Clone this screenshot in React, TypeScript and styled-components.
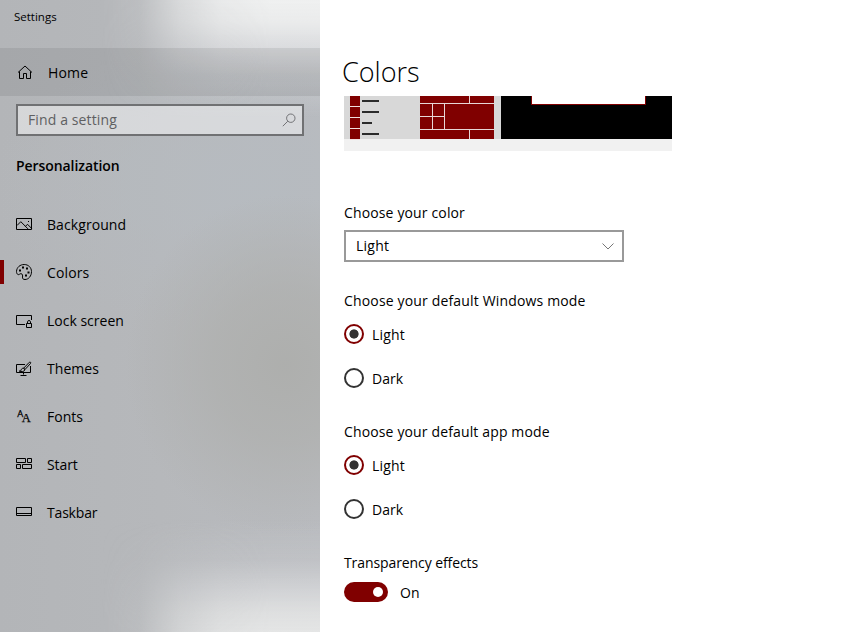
import React, { useState } from "react";
import styled, { createGlobalStyle } from "styled-components";

const ACCENT = "#800000";

const GlobalStyle = createGlobalStyle`
  * { box-sizing: border-box; }
  body {
    margin: 0;
    background: #fff;
    color: #000;
    font-family: "Open Sans", "Noto Sans", sans-serif;
    font-size: 14px;
    line-height: 20px;
    overflow: hidden;
  }
`;

const Window = styled.div`
  display: flex;
  width: 858px;
  height: 632px;
`;

const Sidebar = styled.aside`
  display: flex;
  flex-direction: column;
  position: relative;
  isolation: isolate;
  width: 320px;
  height: 632px;
  flex: none;
  background:
    radial-gradient(ellipse 160px 170px at 285px 365px, rgba(173, 174, 172, 0.95) 0%, rgba(174, 175, 173, 0.7) 45%, rgba(180, 182, 184, 0) 100%),
    radial-gradient(ellipse 260px 150px at 250px 185px, rgba(182, 187, 192, 0.95), rgba(182, 187, 192, 0) 100%),
    linear-gradient(90deg, #b3b5b8, #b6b8bb 50%, #b9bbbf);

  /* Acrylic highlights: bright bands at the top and bottom that fade out to the left. */
  &::before {
    content: "";
    position: absolute;
    inset: 0;
    z-index: -1;
    background: linear-gradient(
      180deg,
      #eff0f0 0,
      rgba(237, 238, 238, 0.94) 22px,
      rgba(230, 231, 233, 0.74) 48px,
      rgba(220, 222, 224, 0.35) 75px,
      rgba(200, 203, 207, 0) 118px,
      rgba(200, 203, 207, 0) 520px,
      rgba(214, 215, 218, 0.25) 560px,
      rgba(222, 223, 225, 0.65) 590px,
      rgba(226, 227, 227, 0.9) 612px,
      #e4e5e5 632px
    );
    mask-image: linear-gradient(
      90deg,
      transparent 100px,
      rgba(0, 0, 0, 0.13) 140px,
      rgba(0, 0, 0, 0.6) 180px,
      rgba(0, 0, 0, 0.88) 220px,
      #000 270px
    );
  }
`;

const TitleBar = styled.header`
  height: 48px;
  padding: 8px 14px;
  font-size: 11.5px;
  line-height: 18px;
`;

const Row = styled.button<{ $home?: boolean; $selected?: boolean }>`
  display: flex;
  align-items: center;
  width: 100%;
  height: 48px;
  flex: none;
  padding: 0 0 0 ${(p) => (p.$home ? 17 : 16)}px;
  border: 0;
  background: ${(p) => (p.$home ? "rgba(0, 0, 0, 0.075)" : "transparent")};
  color: #000;
  font: inherit;
  text-align: left;
  &::before {
    content: "";
    display: ${(p) => (p.$selected ? "block" : "none")};
    width: 4px;
    height: 24px;
    margin: 0 12px 0 -16px;
    background: ${ACCENT};
  }
`;

const RowIcon = styled.svg`
  width: 16px;
  height: 16px;
  flex: none;
  margin-right: 15px;
  fill: none;
  stroke: #000;
  stroke-width: 1;
  overflow: visible;
`;

const Text = styled.span<{ $track?: number; $drop?: number }>`
  padding-top: ${(p) => (p.$drop ?? 0) * 2}px;
  letter-spacing: ${(p) => p.$track ?? 0}px;
  white-space: nowrap;
`;

const SearchBox = styled.label`
  display: flex;
  align-items: center;
  justify-content: space-between;
  height: 32px;
  margin: 8px 16px 0;
  padding: 0 6px 0 10px;
  border: 2px solid #707173;
  background: rgba(255, 255, 255, 0.45);
  color: #5f6062;
`;

const SearchIcon = styled.svg`
  width: 14px;
  height: 14px;
  fill: none;
  stroke: #66676a;
  stroke-width: 0.9;
`;

const GroupTitle = styled.h2`
  margin: 20px 0 24px 16px;
  font-size: 14px;
  font-weight: 600;
  line-height: 20px;
  letter-spacing: -0.07px;
`;

const Nav = styled.nav`
  display: flex;
  flex-direction: column;
`;

const Main = styled.main`
  display: flex;
  flex-direction: column;
  align-items: flex-start;
  padding: 52px 0 0 24px;
`;

const PageTitle = styled.h1`
  height: 44px;
  margin: 0 0 0 -2px;
  font-size: 27px;
  font-weight: 300;
  line-height: 40px;
`;

const Preview = styled.div`
  display: grid;
  grid-template-columns: 157px 171px;
  grid-template-rows: 43px 12px;
  width: 328px;
  background: #f1f1f1;
`;

const StartPreview = styled.div`
  display: flex;
  padding-left: 6px;
  background: #d8d8d8;
`;

const AppList = styled.div`
  display: grid;
  grid-template-columns: 10px 17px;
  grid-template-rows: repeat(4, 10px);
  gap: 1px 2px;
  width: 70px;
  align-content: start;
`;

const AppTile = styled.i`
  background: ${ACCENT};
  box-shadow: 0 1px #f1dede;
`;

const AppName = styled.i<{ $width: number }>`
  width: ${(p) => p.$width}px;
  height: 2px;
  margin-top: 4px;
  background: #2b2b2b;
`;

const TileGrid = styled.div`
  display: grid;
  grid-template-columns: 12px 11px 24px 24px;
  grid-template-rows: 7px 12px 12px 9px;
  gap: 1px;
  width: 74px;
  background: #e8d6d6;
`;

const Tile = styled.i<{ $cols?: string; $rows?: string }>`
  grid-column: ${(p) => p.$cols ?? "auto"};
  grid-row: ${(p) => p.$rows ?? "auto"};
  background: ${ACCENT};
`;

const Desktop = styled.div`
  display: flex;
  padding-left: 30px;
  background: #000;
`;

const SampleWindow = styled.div`
  width: 115px;
  height: 9px;
  border: 1px solid ${ACCENT};
  border-top: 0;
  background: #fff;
`;

const Label = styled.div<{ $top: number; $track?: number }>`
  height: 20px;
  margin-top: ${(p) => p.$top}px;
  letter-spacing: ${(p) => p.$track ?? 0}px;
  white-space: nowrap;
`;

const Select = styled.button`
  display: flex;
  align-items: center;
  justify-content: space-between;
  width: 280px;
  height: 32px;
  margin-top: 7px;
  padding: 0 8px 0 10px;
  border: 2px solid #999;
  background: #fff;
  color: #000;
  font: inherit;
`;

const Chevron = styled.svg`
  width: 12px;
  height: 7px;
  fill: none;
  stroke: #777;
`;

const RadioGroup = styled.div`
  display: flex;
  flex-direction: column;
  gap: 24px;
  margin-top: 13px;
`;

const Option = styled.button`
  display: flex;
  align-items: center;
  gap: 8px;
  height: 20px;
  padding: 0;
  border: 0;
  background: none;
  color: #000;
  font: inherit;
`;

const Radio = styled.span<{ $on: boolean }>`
  display: grid;
  place-items: center;
  width: 20px;
  height: 20px;
  border: 2px solid ${(p) => (p.$on ? ACCENT : "#333")};
  border-radius: 50%;
  &::after {
    content: "";
    width: 10px;
    height: 10px;
    border-radius: 50%;
    background: ${(p) =>
      p.$on ? "radial-gradient(circle, #333 4.2px, rgba(51, 51, 51, 0) 5.1px)" : "transparent"};
  }
`;

const ToggleRow = styled.button`
  display: flex;
  align-items: center;
  gap: 12px;
  height: 20px;
  margin-top: 9px;
  padding: 0;
  border: 0;
  background: none;
  color: #000;
  font: inherit;
`;

const Switch = styled.span<{ $on: boolean }>`
  display: flex;
  align-items: center;
  justify-content: ${(p) => (p.$on ? "flex-end" : "flex-start")};
  width: 44px;
  height: 20px;
  padding: 0 5px;
  border-radius: 10px;
  background: ${(p) => (p.$on ? ACCENT : "#999")};
  &::after {
    content: "";
    width: 10px;
    height: 10px;
    border-radius: 50%;
    background: #fff;
  }
`;

const NAV: { name: string; track: number; icon: React.ReactNode }[] = [
  {
    name: "Background",
    track: 0.08,
    icon: (
      <>
        <path d="M.5 2.5h15v11H.5z" />
        <path d="M1 9.5 4.8 5.7 12 12.9M9.5 10.3l2-2 4 4" />
        <path d="M12 5.5h1" />
      </>
    ),
  },
  {
    name: "Colors",
    track: 0.12,
    icon: (
      <>
        <path d="M8.2.5C12.4.5 15.5 3.6 15.5 7.6c0 4.5-3 7.9-6.5 7.9-2 0-2.700-1-2.500-2.400.2-1.500.2-3.200-1.400-3.400C3.600 9.500 3.400 11 2.200 10.600.9 10.200.5 8.900.5 7.300.8 3.300 4 .5 8.200.5z" />
        <path d="M3 6.500h2M6 3.500h2M10 4.500h2M11.500 8.500h2M9 11.500h2" strokeWidth="1.800" />
      </>
    ),
  },
  {
    name: "Lock screen",
    track: 0,
    icon: (
      <>
        <path d="M9 12.500H.5v-9h15V8" />
        <path d="M10.500 11.500h5v4h-5zM11.500 11.500V9.800c0-1.700 3-1.700 3 0v1.700" />
      </>
    ),
  },
  {
    name: "Themes",
    track: 0.05,
    icon: (
      <>
        <path d="M9 4.500H.5v8h14V6M7.500 12.500v2M4.500 15.500h6" />
        <path d="M7.500 8.300 13.300 2.300c.9-.8 2 .3 1.200 1.200L9 9.500zM7.500 8.300c-1.800-.3-2.300 1.200-2.500 2.200-.5.500-1 .6-1.800.6 2 .9 5.500.8 5.800-1.600z" />
      </>
    ),
  },
  {
    name: "Fonts",
    track: 0,
    icon: (
      <g fill="#000" stroke="#000" strokeWidth="0.25" fontFamily="Open Sans, sans-serif">
        <text x="1.200" y="9" fontSize="9.500">A</text>
        <text x="5.800" y="14" fontSize="12.500" fontFamily="Liberation Serif, serif">A</text>
      </g>
    ),
  },
  {
    name: "Start",
    track: -0.1,
    icon: <path d="M.5 2.500h9v4h-9zM11.500 2.500h4v4h-4zM.5 8.500h4v4h-4zM6.500 8.500h9v4h-9z" />,
  },
  {
    name: "Taskbar",
    track: -0.18,
    icon: <path d="M.5 3.500h15v8H.5zM.5 9.500h15" />,
  },
];

function ModeOptions() {
  const [mode, setMode] = useState("Light");
  return (
    <RadioGroup role="radiogroup">
      {["Light", "Dark"].map((name) => (
        <Option key={name} role="radio" aria-checked={mode === name} onClick={() => setMode(name)}>
          <Radio $on={mode === name} />
          <Text $drop={1} $track={name === "Light" ? 0.2 : 0}>{name}</Text>
        </Option>
      ))}
    </RadioGroup>
  );
}

export default function App() {
  const [page, setPage] = useState("Colors");
  const [transparent, setTransparent] = useState(true);
  return (
    <Window>
      <GlobalStyle />
      <Sidebar>
        <TitleBar>Settings</TitleBar>
        <Row $home>
          <RowIcon viewBox="0 0 16 16">
            <path d="M1 8.500 8 2l7 6.500M2.500 7.500v7h4v-5h3v5h4v-7" />
          </RowIcon>
          <Text $drop={1} $track={0.15}>Home</Text>
        </Row>
        <SearchBox>
          <Text $track={0.12}>Find a setting</Text>
          <SearchIcon viewBox="0 0 14 14">
            <circle cx="8.800" cy="5.200" r="4.200" />
            <path d="M5.800 8.200.8 13.200" />
          </SearchIcon>
        </SearchBox>
        <GroupTitle>Personalization</GroupTitle>
        <Nav>
          {NAV.map((item) => (
            <Row key={item.name} $selected={page === item.name} onClick={() => setPage(item.name)}>
              <RowIcon viewBox="0 0 16 16">{item.icon}</RowIcon>
              <Text $drop={1} $track={item.track}>{item.name}</Text>
            </Row>
          ))}
        </Nav>
      </Sidebar>
      <Main>
        <PageTitle>Colors</PageTitle>
        <Preview>
          <StartPreview>
            <AppList>
              {[17, 17, 10, 17].map((width, i) => (
                <React.Fragment key={i}>
                  <AppTile />
                  <AppName $width={width} />
                </React.Fragment>
              ))}
            </AppList>
            <TileGrid>
              <Tile $cols="1 / 4" />
              <Tile />
              <Tile />
              <Tile />
              <Tile $cols="3 / 5" $rows="2 / 4" />
              <Tile />
              <Tile />
              <Tile $cols="1 / 4" />
              <Tile />
            </TileGrid>
          </StartPreview>
          <Desktop>
            <SampleWindow />
          </Desktop>
        </Preview>
        <Label $top={52} $track={0.14}>Choose your color</Label>
        <Select>
          <Text $track={0.25}>Light</Text>
          <Chevron viewBox="0 0 12 7">
            <path d="m.5.5 5.500 5.500L11.500.5" />
          </Chevron>
        </Select>
        <Label $top={29} $track={0.16}>Choose your default Windows mode</Label>
        <ModeOptions />
        <Label $top={34} $track={0.14}>Choose your default app mode</Label>
        <ModeOptions />
        <Label $top={34} $track={-0.09}>Transparency effects</Label>
        <ToggleRow role="switch" aria-checked={transparent} onClick={() => setTransparent(!transparent)}>
          <Switch $on={transparent} />
          <Text $drop={1}>{transparent ? "On" : "Off"}</Text>
        </ToggleRow>
      </Main>
    </Window>
  );
}
